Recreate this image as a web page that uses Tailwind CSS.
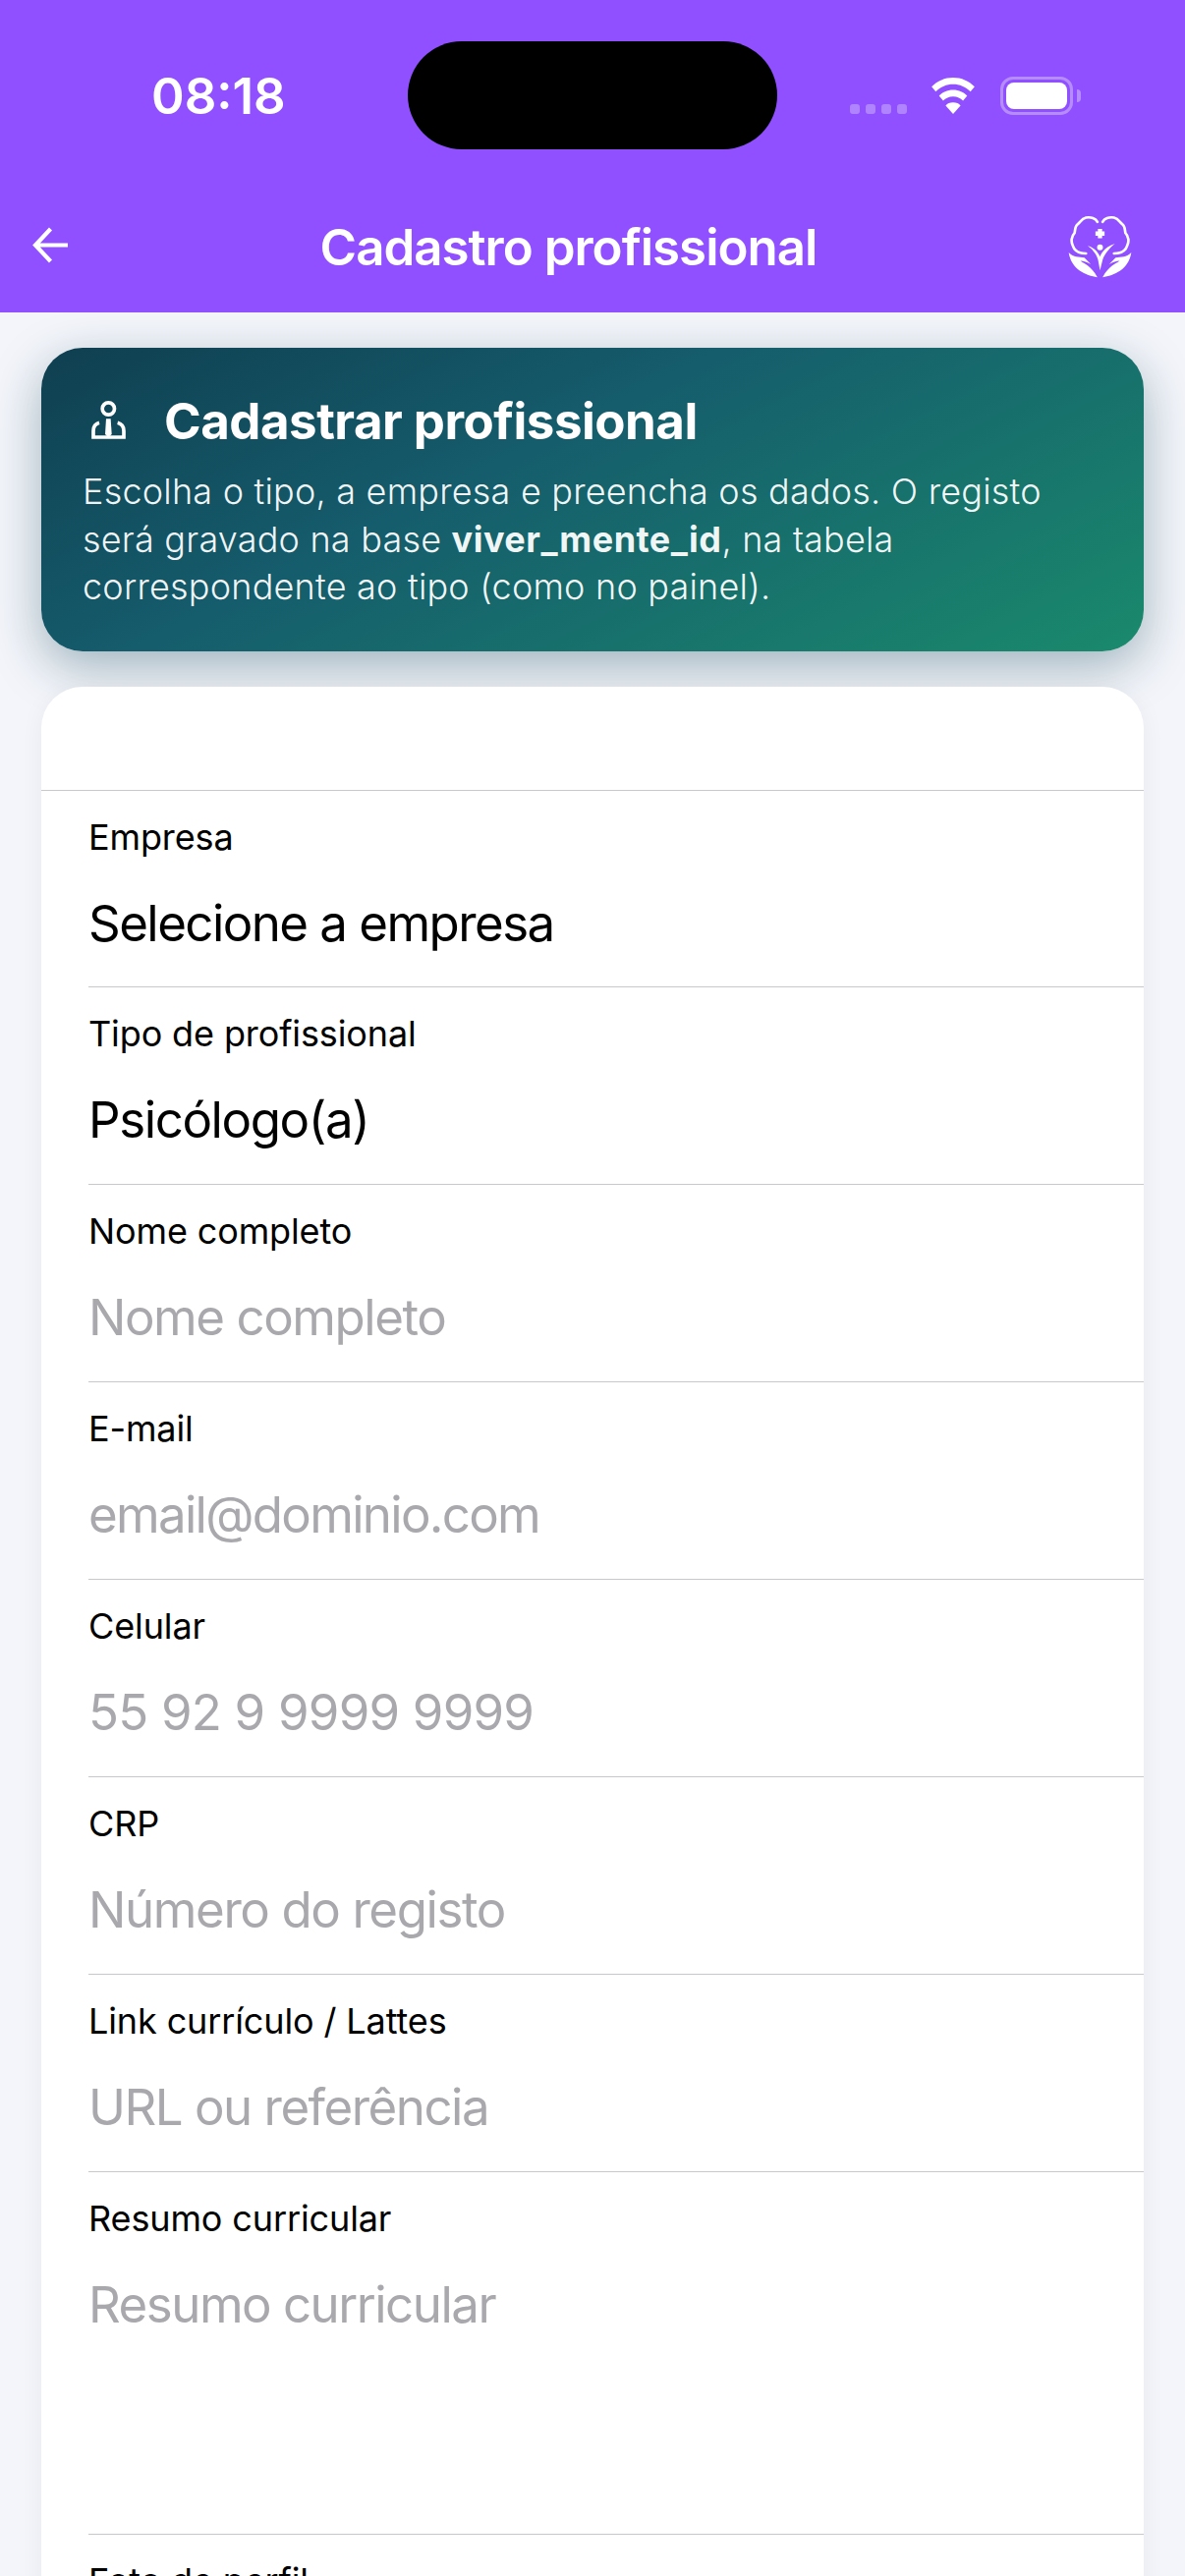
<!DOCTYPE html>
<html lang="pt-BR">
<head>
  <meta charset="UTF-8" />
  <title>Cadastro profissional</title>
  <script src="https://cdn.jsdelivr.net/npm/@tailwindcss/browser@4"></script>
</head>
<body class="bg-[#f3f5fa] font-['Inter',sans-serif] w-[1206px] h-[2622px] overflow-hidden">
  <!-- topo -->
  <header class="bg-[#9050ff] h-[318px] text-white relative">
    <div class="h-[192px] relative">
      <span class="absolute left-[154px] top-[70px] text-[51px] leading-[56px] font-semibold">08:18</span>
      <div class="absolute left-[415px] top-[42px] w-[376px] h-[110px] bg-black rounded-[55px]"></div>
      <div class="absolute left-[865px] top-[106px] flex gap-[6px]">
        <span class="w-[10px] h-[10px] rounded-[3px] bg-white/30"></span>
        <span class="w-[10px] h-[10px] rounded-[3px] bg-white/30"></span>
        <span class="w-[10px] h-[10px] rounded-[3px] bg-white/30"></span>
        <span class="w-[10px] h-[10px] rounded-[3px] bg-white/30"></span>
      </div>
      <svg class="absolute left-[945px] top-[79px]" width="50" height="37" viewBox="0 0 52 44" fill="white">
        <path d="M26 0C16 0 7 4 0 11l5 6C11 11 18 8 26 8s15 3 21 9l5-6C45 4 36 0 26 0z"/>
        <path d="M26 15c-7 0-13 3-17 7l5 6c3-3 7-5 12-5s9 2 12 5l5-6c-4-4-10-7-17-7z"/>
        <path d="M26 30c-4 0-7 1-9 4l9 10 9-10c-2-3-5-4-9-4z"/>
      </svg>
      <div class="absolute left-[1018px] top-[78px] w-[74px] h-[39px] rounded-[13px] border-[3px] border-white/35 p-[3px]">
        <div class="w-full h-full bg-white rounded-[8px]"></div>
      </div>
      <div class="absolute left-[1096px] top-[91px] w-[4px] h-[13px] rounded-r-full bg-white/35"></div>
    </div>
    <div class="h-[126px] flex items-start justify-between relative">
      <svg class="ml-[33px] mt-[39px]" width="37" height="37" viewBox="0 0 37 37" fill="none" stroke="white" stroke-width="4.2">
        <path d="M36 18.5H3M18.5 2 3 18.5 18.5 35"/>
      </svg>
      <h1 class="absolute left-0 w-[1157px] top-[29px] text-center text-[51px] leading-[62px] font-semibold tracking-[-1px]">Cadastro profissional</h1>
      <svg class="mr-[54px] mt-[27px]" width="65" height="64" viewBox="80 28 196 192" fill="white">
        <path d="M170 48C165 38 150 32 135 35 122 38 118 48 110 55 100 62 102 75 100 82 90 92 88 110 95 122 100 138 115 145 135 145" fill="none" stroke="white" stroke-width="8" stroke-linecap="round"/>
        <path d="M186 48C191 38 206 32 221 35 234 38 238 48 246 55 256 62 254 75 256 82 266 92 268 110 261 122 256 138 241 145 221 145" fill="none" stroke="white" stroke-width="8" stroke-linecap="round"/>
        <path d="M178 70v28M164 84h28" fill="none" stroke="white" stroke-width="13"/>
        <circle cx="178" cy="126" r="9"/>
        <path d="M140 122C158 126 172 140 178 155 184 138 200 122 224 115 205 130 190 150 186 165L178 197 172 165C168 148 155 132 140 122z"/>
        <path d="M82 142C98 158 112 155 130 158L150 178C138 172 128 168 118 168 130 178 150 182 170 218 135 212 90 195 82 142z"/>
        <path d="M274 142C258 158 244 155 226 158L206 178C218 172 228 168 238 168 226 178 206 182 186 218 221 212 266 195 274 142z"/>
      </svg>
    </div>
  </header>

  <main class="pt-[36px] px-[42px]">
    <!-- aviso -->
    <section class="h-[309px] rounded-[42px] bg-[linear-gradient(153deg,#0f3f50_0%,#155c6c_40%,#1a8a6c_100%)] shadow-[0_16px_50px_rgba(15,63,82,0.36)] pl-[42px] pr-[60px] pt-[45px] text-white">
      <div class="flex items-center h-[60px]">
        <svg class="ml-[9px] -mt-[4px]" width="35" height="40" viewBox="0 0 105 120" fill="none" stroke="white" stroke-width="11">
          <circle cx="52" cy="27" r="18.5"/>
          <path d="M24 70Q6 75 6 95V114H99V95Q99 75 80 70"/>
          <path d="M45 58H59L62 105 52 114 42 105z" fill="white" stroke="none"/>
        </svg>
        <h2 class="ml-[39px] text-[51px] leading-[60px] font-bold tracking-[-0.5px]">Cadastrar profissional</h2>
      </div>
      <p class="mt-[17px] text-[36px] leading-[48.5px] font-light tracking-[0.21px] text-white/95">Escolha o tipo, a empresa e preencha os dados. O registo será gravado na base <strong class="font-bold tracking-[0.5px]">viver_mente_id</strong>, na tabela correspondente ao tipo (como no painel).</p>
    </section>

    <!-- formulario -->
    <form class="relative mt-[36px] bg-white rounded-t-[42px] shadow-[0_4px_24px_rgba(0,0,0,0.05)] pt-[105px] text-black">
      <div class="border-t border-[#c8c8cc]">
        <div class="ml-[48px] h-[200px] border-b border-[#c8c8cc] pt-[25px]">
          <label class="block text-[36px] leading-[44px] tracking-[-0.12px]">Empresa</label>
          <div class="mt-[35px] text-[51px] leading-[62px] tracking-[-1.55px]">Selecione a empresa</div>
        </div>
        <div class="ml-[48px] h-[201px] border-b border-[#c8c8cc] pt-[25px]">
          <label class="block text-[36px] leading-[44px] tracking-[-0.12px]">Tipo de profissional</label>
          <div class="mt-[35px] text-[51px] leading-[62px] tracking-[-1.4px]">Psicólogo(a)</div>
        </div>
        <div class="ml-[48px] h-[201px] border-b border-[#c8c8cc] pt-[25px]">
          <label class="block text-[36px] leading-[44px] tracking-[-0.12px]">Nome completo</label>
          <div class="mt-[35px] text-[51px] leading-[62px] tracking-[-1.45px] text-[#a9a9ad]">Nome completo</div>
        </div>
        <div class="ml-[48px] h-[201px] border-b border-[#c8c8cc] pt-[25px]">
          <label class="block text-[36px] leading-[44px] tracking-[-0.12px]">E-mail</label>
          <div class="mt-[35px] text-[51px] leading-[62px] tracking-[-1.7px] text-[#a9a9ad]">email@dominio.com</div>
        </div>
        <div class="ml-[48px] h-[201px] border-b border-[#c8c8cc] pt-[25px]">
          <label class="block text-[36px] leading-[44px] tracking-[-0.12px]">Celular</label>
          <div class="mt-[35px] text-[51px] leading-[62px] tracking-[-0.8px] text-[#a9a9ad]">55 92 9 9999 9999</div>
        </div>
        <div class="ml-[48px] h-[201px] border-b border-[#c8c8cc] pt-[25px]">
          <label class="block text-[36px] leading-[44px] tracking-[-0.12px]">CRP</label>
          <div class="mt-[35px] text-[51px] leading-[62px] tracking-[-1.4px] text-[#a9a9ad]">Número do registo</div>
        </div>
        <div class="ml-[48px] h-[201px] border-b border-[#c8c8cc] pt-[25px]">
          <label class="block text-[36px] leading-[44px] tracking-[-0.12px]">Link currículo / Lattes</label>
          <div class="mt-[35px] text-[51px] leading-[62px] tracking-[-1.5px] text-[#a9a9ad]">URL ou referência</div>
        </div>
        <div class="ml-[48px] h-[369px] border-b border-[#c8c8cc] pt-[25px]">
          <label class="block text-[36px] leading-[44px] tracking-[-0.12px]">Resumo curricular</label>
          <div class="mt-[35px] text-[51px] leading-[62px] tracking-[-1.5px] text-[#a9a9ad]">Resumo curricular</div>
        </div>
        <div class="ml-[48px] pt-[25px]">
          <label class="block text-[36px] leading-[44px] tracking-[-0.12px]">Foto de perfil</label>
        </div>
      </div>
    </form>
  </main>
</body>
</html>
